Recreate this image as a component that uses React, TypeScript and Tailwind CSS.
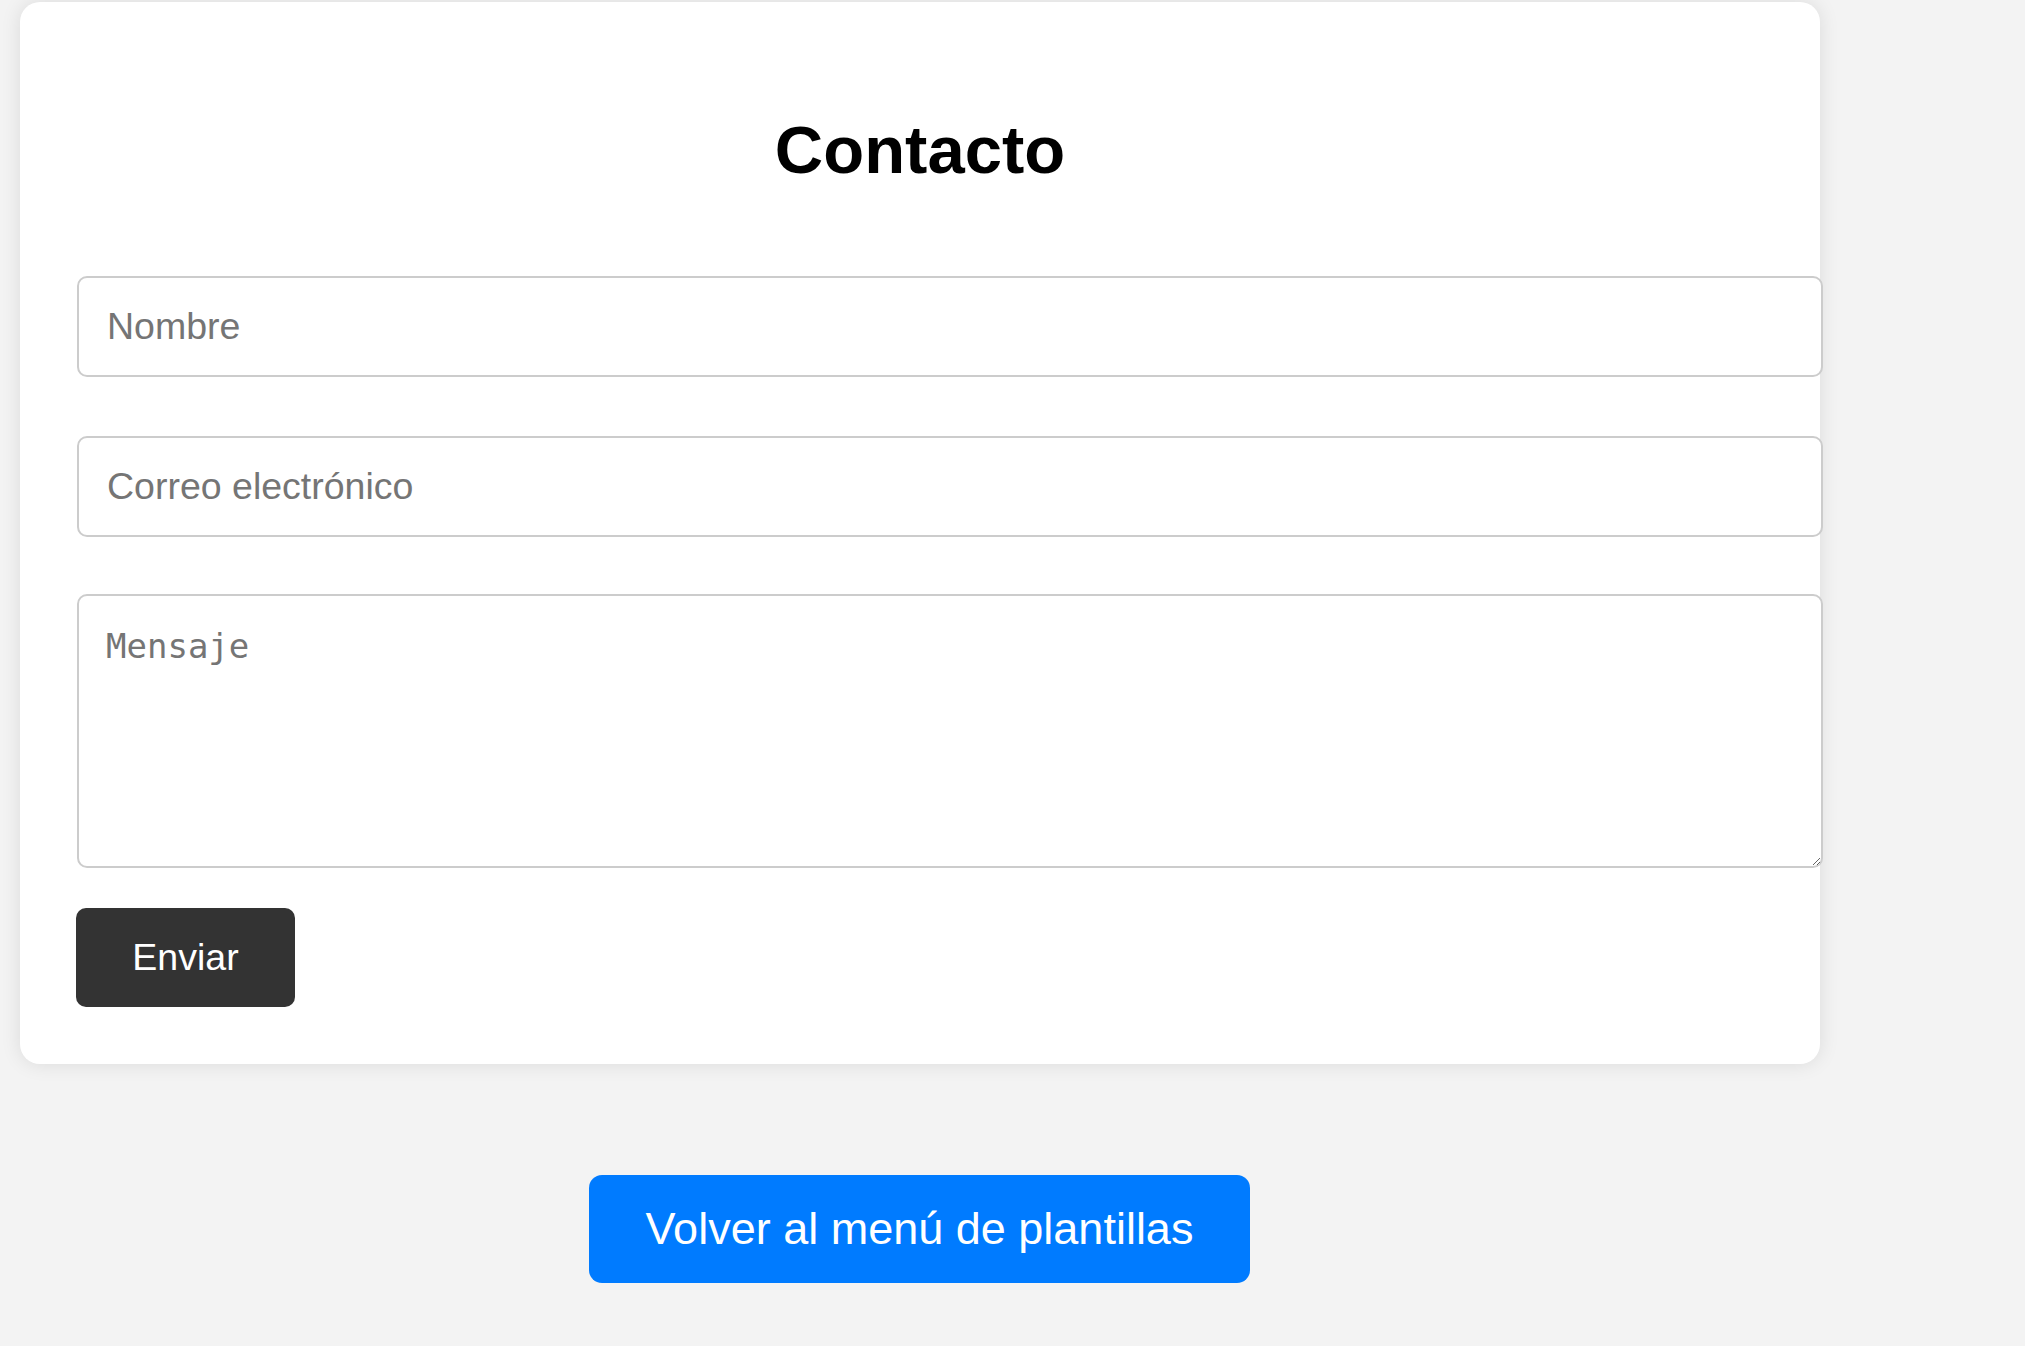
import React from "react";

export default function App() {
  return (
    <div className="min-h-[1346px] bg-[#f3f3f3] pt-[2px] font-['Liberation_Sans',Arial,sans-serif]">
      <div className="ml-[20px] w-[1800px] rounded-[20px] bg-white p-[57px] shadow-[0_0_20px_rgba(0,0,0,0.1)]">
        <h2 className="mt-[52px] mb-[88px] text-center text-[67px] font-bold leading-[77px] text-black">
          Contacto
        </h2>
        <form onSubmit={(e) => e.preventDefault()}>
          <input
            type="text"
            placeholder="Nombre"
            className="mb-[59px] block h-[101px] w-[1746px] rounded-[10px] border-2 border-[#cccccc] bg-white px-[28px] text-[37.5px] text-black outline-none placeholder:text-[#757575]"
          />
          <input
            type="email"
            placeholder="Correo electrónico"
            className="mb-[57px] block h-[101px] w-[1746px] rounded-[10px] border-2 border-[#cccccc] bg-white px-[28px] text-[37.5px] text-black outline-none placeholder:text-[#757575]"
          />
          <textarea
            placeholder="Mensaje"
            className="block h-[274px] w-[1746px] resize-y rounded-[10px] border-2 border-[#cccccc] bg-white px-[27px] pt-[31px] font-['DejaVu_Sans_Mono',monospace] text-[34px] leading-[39px] text-black outline-none placeholder:text-[#757575]"
          />
          <button
            type="submit"
            className="mt-[40px] ml-[-1px] flex h-[99px] w-[219px] items-center justify-center rounded-[10px] bg-[#333333] text-[37.5px] text-white"
          >
            Enviar
          </button>
        </form>
      </div>
      <div className="mt-[111px] ml-[589px]">
        <button
          type="button"
          className="flex h-[108px] w-[661px] items-center justify-center rounded-[13px] bg-[#007bff] text-[45px] whitespace-nowrap text-white"
        >
          Volver al menú de plantillas
        </button>
      </div>
    </div>
  );
}
